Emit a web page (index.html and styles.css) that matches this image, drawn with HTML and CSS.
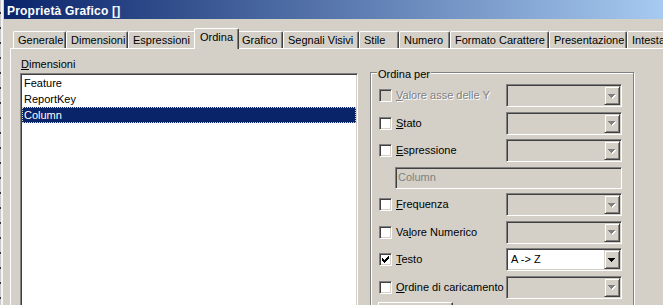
FILE: index.html
```html
<!DOCTYPE html>
<html>
  <head>
    <meta charset="utf-8" />
    <link rel="stylesheet" href="styles.css">
  </head>
  <body>
    <div class="screen">
      <div class="behind"></div>
      <div class="dialog">
        <div class="titlebar">Proprietà Grafico []</div>

        <div class="tabs">
          <div class="tab">Generale</div>
          <div class="tab">Dimensioni</div>
          <div class="tab">Espressioni</div>
          <div class="tab active">Ordina</div>
          <div class="tab">Grafico</div>
          <div class="tab">Segnali Visivi</div>
          <div class="tab">Stile</div>
          <div class="tab">Numero</div>
          <div class="tab">Formato Carattere</div>
          <div class="tab">Presentazione</div>
          <div class="tab">Intestazione</div>
        </div>

        <div class="panel">
          <div class="dims">
            <div class="caption"><u>D</u>imensioni</div>
            <div class="listbox">
              <div class="item">Feature</div>
              <div class="item">ReportKey</div>
              <div class="item selected">Column</div>
            </div>
          </div>

          <div class="group">
            <div class="group-title">Ordina per</div>

            <div class="row disabled">
              <span class="check"></span>
              <span class="label"><u>V</u>alore asse delle Y</span>
              <span class="combo">
                <span class="field"></span>
                <span class="drop"><svg width="8" height="5" viewBox="0 0 8 5" shape-rendering="crispEdges"><path class="arrow-shadow" d="M1 1h7v1h-1v1h-1v1h-1v1h-1v-1h-1v-1h-1v-1h-1z"/><path class="arrow" d="M0 0h7v1h-1v1h-1v1h-1v1h-1v-1h-1v-1h-1v-1h-1z"/></svg></span>
              </span>
            </div>

            <div class="row">
              <span class="check"></span>
              <span class="label"><u>S</u>tato</span>
              <span class="combo">
                <span class="field"></span>
                <span class="drop"><svg width="8" height="5" viewBox="0 0 8 5" shape-rendering="crispEdges"><path class="arrow-shadow" d="M1 1h7v1h-1v1h-1v1h-1v1h-1v-1h-1v-1h-1v-1h-1z"/><path class="arrow" d="M0 0h7v1h-1v1h-1v1h-1v1h-1v-1h-1v-1h-1v-1h-1z"/></svg></span>
              </span>
            </div>

            <div class="row">
              <span class="check"></span>
              <span class="label"><u>E</u>spressione</span>
              <span class="combo">
                <span class="field"></span>
                <span class="drop"><svg width="8" height="5" viewBox="0 0 8 5" shape-rendering="crispEdges"><path class="arrow-shadow" d="M1 1h7v1h-1v1h-1v1h-1v1h-1v-1h-1v-1h-1v-1h-1z"/><path class="arrow" d="M0 0h7v1h-1v1h-1v1h-1v1h-1v-1h-1v-1h-1v-1h-1z"/></svg></span>
              </span>
            </div>

            <div class="edit">Column</div>

            <div class="row">
              <span class="check"></span>
              <span class="label"><u>F</u>requenza</span>
              <span class="combo">
                <span class="field"></span>
                <span class="drop"><svg width="8" height="5" viewBox="0 0 8 5" shape-rendering="crispEdges"><path class="arrow-shadow" d="M1 1h7v1h-1v1h-1v1h-1v1h-1v-1h-1v-1h-1v-1h-1z"/><path class="arrow" d="M0 0h7v1h-1v1h-1v1h-1v1h-1v-1h-1v-1h-1v-1h-1z"/></svg></span>
              </span>
            </div>

            <div class="row">
              <span class="check"></span>
              <span class="label">Va<u>l</u>ore Numerico</span>
              <span class="combo">
                <span class="field"></span>
                <span class="drop"><svg width="8" height="5" viewBox="0 0 8 5" shape-rendering="crispEdges"><path class="arrow-shadow" d="M1 1h7v1h-1v1h-1v1h-1v1h-1v-1h-1v-1h-1v-1h-1z"/><path class="arrow" d="M0 0h7v1h-1v1h-1v1h-1v1h-1v-1h-1v-1h-1v-1h-1z"/></svg></span>
              </span>
            </div>

            <div class="row">
              <span class="check checked"><svg width="7" height="7" viewBox="0 0 7 7" shape-rendering="crispEdges"><path d="M6 0h1v3h-1v1h-1v1h-1v1h-1v1h-1v-1h-1v-1h-1v-3h1v1h1v1h1v-1h1v-1h1z"/></svg></span>
              <span class="label"><u>T</u>esto</span>
              <span class="combo enabled">
                <span class="field">A -&gt; Z</span>
                <span class="drop"><svg width="8" height="5" viewBox="0 0 8 5" shape-rendering="crispEdges"><path class="arrow" d="M0 0h7v1h-1v1h-1v1h-1v1h-1v-1h-1v-1h-1v-1h-1z"/></svg></span>
              </span>
            </div>

            <div class="row">
              <span class="check"></span>
              <span class="label"><u>O</u>rdine di caricamento</span>
              <span class="combo">
                <span class="field"></span>
                <span class="drop"><svg width="8" height="5" viewBox="0 0 8 5" shape-rendering="crispEdges"><path class="arrow-shadow" d="M1 1h7v1h-1v1h-1v1h-1v1h-1v-1h-1v-1h-1v-1h-1z"/><path class="arrow" d="M0 0h7v1h-1v1h-1v1h-1v1h-1v-1h-1v-1h-1v-1h-1z"/></svg></span>
              </span>
            </div>

            <div class="button"></div>
          </div>
        </div>
      </div>
    </div>
  </body>
</html>
```

FILE: styles.css
```css
* {
  box-sizing: border-box;
}

body {
  margin: 0;
  background: #d4d0c8;
  font-family: "Liberation Sans", Arial, sans-serif;
  font-size: 11px;
  color: #000000;
}

.screen {
  display: flex;
  width: 663px;
  height: 305px;
  overflow: hidden;
}

/* bit of the window behind the dialog */
.behind {
  width: 3px;
  flex: none;
  background:
    repeating-linear-gradient(180deg, transparent 0 12px, #333333 12px 14px, transparent 14px 15px) 0 0 / 1px 100% no-repeat,
    linear-gradient(90deg, #c8c8c8 1px, #f4f4f4 1px);
}

.dialog {
  flex: 1;
  min-width: 0;
  display: flex;
  flex-direction: column;
  border-left: 1px solid #d4d0c8;
  background: #d4d0c8;
}

.titlebar {
  height: 19px;
  flex: none;
  padding: 4px 0 0 3px;
  line-height: 15px;
  font-size: 12px;
  font-weight: bold;
  letter-spacing: 0.2px;
  color: #ffffff;
  white-space: nowrap;
  background: linear-gradient(90deg, #0a246a, #a6caf0);
}

/* tab strip */
.tabs {
  display: grid;
  grid-template-columns: 53px 62px 68px 41px 46px 76px 40px 51px 99px 78px 80px;
  align-items: end;
  height: 29px;
  flex: none;
  margin-left: 9px;
}

.tab {
  height: 17px;
  padding: 2px 0 0 4px;
  line-height: 13px;
  white-space: nowrap;
  overflow: hidden;
  border: 1px solid #ffffff;
  border-bottom: none;
  border-right-color: #404040;
  border-radius: 2px 2px 0 0;
  box-shadow: inset -1px 0 0 #808080;
  background: #d4d0c8;
}

.tab.active {
  height: 21px;
  margin: 0 -2px -1px;
  padding-left: 5px;
  position: relative;
  z-index: 1;
}

.panel {
  flex: 1;
  display: flex;
  gap: 12px;
  margin-left: 6px;
  padding: 9px 0 0 9px;
  border-top: 1px solid #ffffff;
  border-left: 1px solid #ffffff;
}

.dims {
  width: 338px;
  flex: none;
  display: flex;
  flex-direction: column;
}

.caption {
  line-height: 13px;
  padding-left: 1px;
  margin-bottom: 2px;
}

.listbox {
  flex: 1;
  padding: 1px;
  background: #ffffff;
  border: 1px solid;
  border-color: #808080 #ffffff #ffffff #808080;
  box-shadow: inset 1px 1px 0 #404040, inset -1px -1px 0 #d4d0c8;
}

.item {
  height: 16px;
  line-height: 16px;
  padding-left: 2px;
  white-space: nowrap;
}

.item.selected {
  background: #0a246a;
  color: #ffffff;
  outline: 1px dotted #d8d4b8;
  outline-offset: -1px;
}

/* Ordina per */
.group {
  position: relative;
  width: 264px;
  flex: none;
  margin-top: 14px;
  padding: 11px 11px 0 8px;
  display: flex;
  flex-direction: column;
  gap: 4.5px;
  border: 1px solid #808080;
  border-bottom: none;
  box-shadow: inset 1px 1px 0 #ffffff, 1px 1px 0 #ffffff;
}

.group-title {
  position: absolute;
  top: -5px;
  left: 6px;
  padding: 0 1px;
  line-height: 13px;
  background: #d4d0c8;
}

.row {
  display: flex;
  align-items: center;
  height: 23px;
  flex: none;
}

.check {
  width: 13px;
  height: 13px;
  flex: none;
  margin-right: 4px;
  padding: 2px 0 0 2px;
  background: #ffffff;
  border: 1px solid;
  border-color: #808080 #ffffff #ffffff #808080;
  box-shadow: inset 1px 1px 0 #404040, inset -1px -1px 0 #d4d0c8;
}

.check svg {
  display: block;
}

.label {
  width: 110px;
  flex: none;
  line-height: 13px;
  white-space: nowrap;
}

.disabled .check {
  background: #d4d0c8;
}

.disabled .label {
  color: #808080;
  text-shadow: 1px 1px 0 #ffffff;
}

.combo {
  width: 116px;
  height: 23px;
  flex: none;
  display: flex;
  padding: 1px;
  border: 1px solid;
  border-color: #808080 #ffffff #ffffff #808080;
  box-shadow: inset 1px 1px 0 #404040, inset -1px -1px 0 #d4d0c8;
}

.field {
  flex: 1;
  padding-left: 3px;
  line-height: 19px;
  white-space: nowrap;
}

.combo.enabled .field {
  background: #ffffff;
}

.drop {
  width: 16px;
  flex: none;
  display: flex;
  align-items: center;
  justify-content: center;
  padding-top: 1px;
  border: 1px solid;
  border-color: #d4d0c8 #404040 #404040 #d4d0c8;
  box-shadow: inset 1px 1px 0 #ffffff, inset -1px -1px 0 #808080;
  background: #d4d0c8;
}

.drop svg {
  display: block;
}

.arrow {
  fill: #808080;
}

.arrow-shadow {
  fill: #ffffff;
}

.combo.enabled .arrow {
  fill: #000000;
}

.edit {
  width: 227px;
  height: 22px;
  flex: none;
  margin-left: 16px;
  padding-left: 2px;
  line-height: 18px;
  color: #808080;
  border: 1px solid;
  border-color: #808080 #ffffff #ffffff #808080;
  box-shadow: inset 1px 1px 0 #404040, inset -1px -1px 0 #d4d0c8;
}

.button {
  width: 75px;
  height: 20px;
  flex: none;
  margin: -1.5px 0 0 -1px;
  border-top: 1px solid #ffffff;
  border-left: 1px solid #ffffff;
  border-right: 1px solid #404040;
  box-shadow: inset -1px 0 0 #808080;
}
```
